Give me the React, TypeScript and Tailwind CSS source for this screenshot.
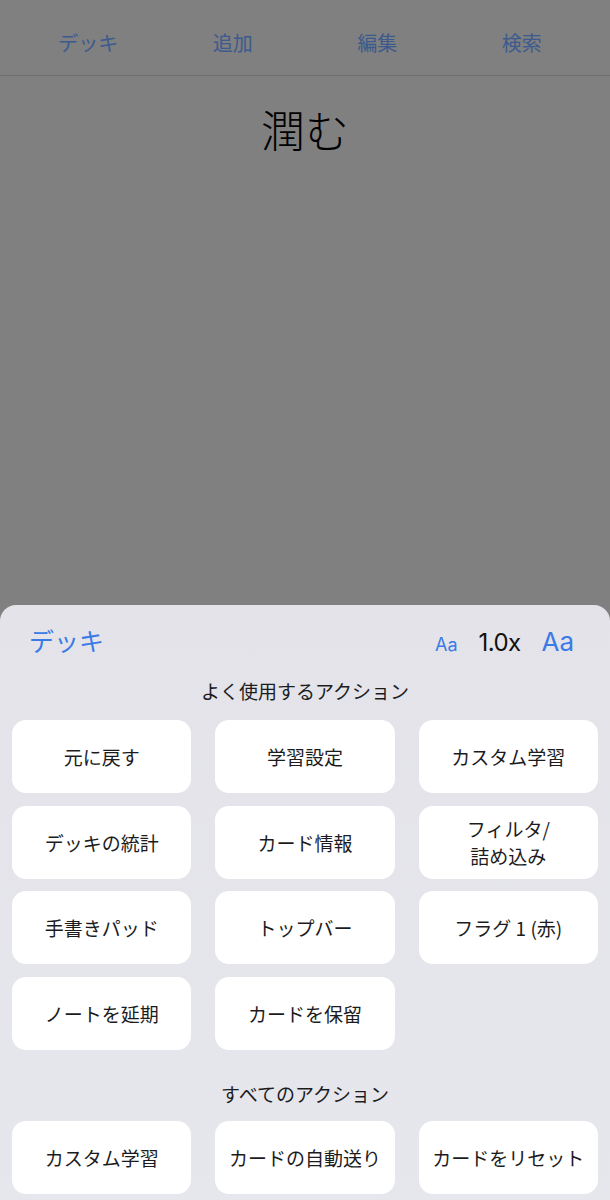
import React from "react";

const font = "font-['Noto_Sans_CJK_JP','Noto_Sans',sans-serif]";

const frequent = [
  "元に戻す",
  "学習設定",
  "カスタム学習",
  "デッキの統計",
  "カード情報",
  "フィルタ/\n詰め込み",
  "手書きパッド",
  "トップバー",
  "フラグ 1 (赤)",
  "ノートを延期",
  "カードを保留",
];

const allActions = ["カスタム学習", "カードの自動送り", "カードをリセット"];

const ActionButton: React.FC<{ label: string }> = ({ label }) => (
  <button className="h-[73px] rounded-[14px] bg-white text-[19px] leading-[27px] text-[#1c1c1e] whitespace-pre-line flex items-center justify-center text-center">
    {label}
  </button>
);

const App: React.FC = () => {
  return (
    <div className={`${font} w-[610px] h-[1200px] bg-[#808080] flex flex-col overflow-hidden`}>
      {/* top bar (dimmed) */}
      <div className="h-[76px] border-b border-[#6e6e6e] px-4 grid grid-cols-4 items-center pt-[10px]">
        {["デッキ", "追加", "編集", "検索"].map((t) => (
          <span key={t} className="text-center text-[20px] text-[#3c5a8e]">
            {t}
          </span>
        ))}
      </div>

      {/* card content */}
      <div className="flex-1 flex justify-center pt-[24px]">
        <span className="text-[44px] leading-[58px] text-black font-light">潤む</span>
      </div>

      {/* action sheet */}
      <div className="h-[595px] rounded-t-[16px] bg-gradient-to-b from-[#e3e3e9] to-[#e6e7ec] px-3 pt-[17px]">
        <div className="flex items-center justify-between pl-[17px] pr-[24px] h-[38px]">
          <span className="text-[25px] text-[#3a7be6]">デッキ</span>
          <div className="flex items-baseline gap-[21px]">
            <span className="text-[18px] text-[#3a7be6] font-['Inter',sans-serif]">Aa</span>
            <span className="text-[24px] text-[#111] font-['Inter',sans-serif] tracking-tight">1.0x</span>
            <span className="text-[26px] text-[#3a7be6] font-['Inter',sans-serif]">Aa</span>
          </div>
        </div>
        <div className="text-center text-[19px] text-[#1c1c1e] mt-[18px] h-[26px] leading-[26px]">
          よく使用するアクション
        </div>
        <div className="grid grid-cols-3 gap-x-6 gap-y-[12.5px] mt-[16px]">
          {frequent.map((l) => (
            <ActionButton key={l} label={l} />
          ))}
        </div>
        <div className="text-center text-[19px] text-[#1c1c1e] mt-[31px] h-[26px] leading-[26px]">
          すべてのアクション
        </div>
        <div className="grid grid-cols-3 gap-x-6 gap-y-3 mt-[14px]">
          {allActions.map((l) => (
            <ActionButton key={l} label={l} />
          ))}
        </div>
      </div>
    </div>
  );
};

export default App;
